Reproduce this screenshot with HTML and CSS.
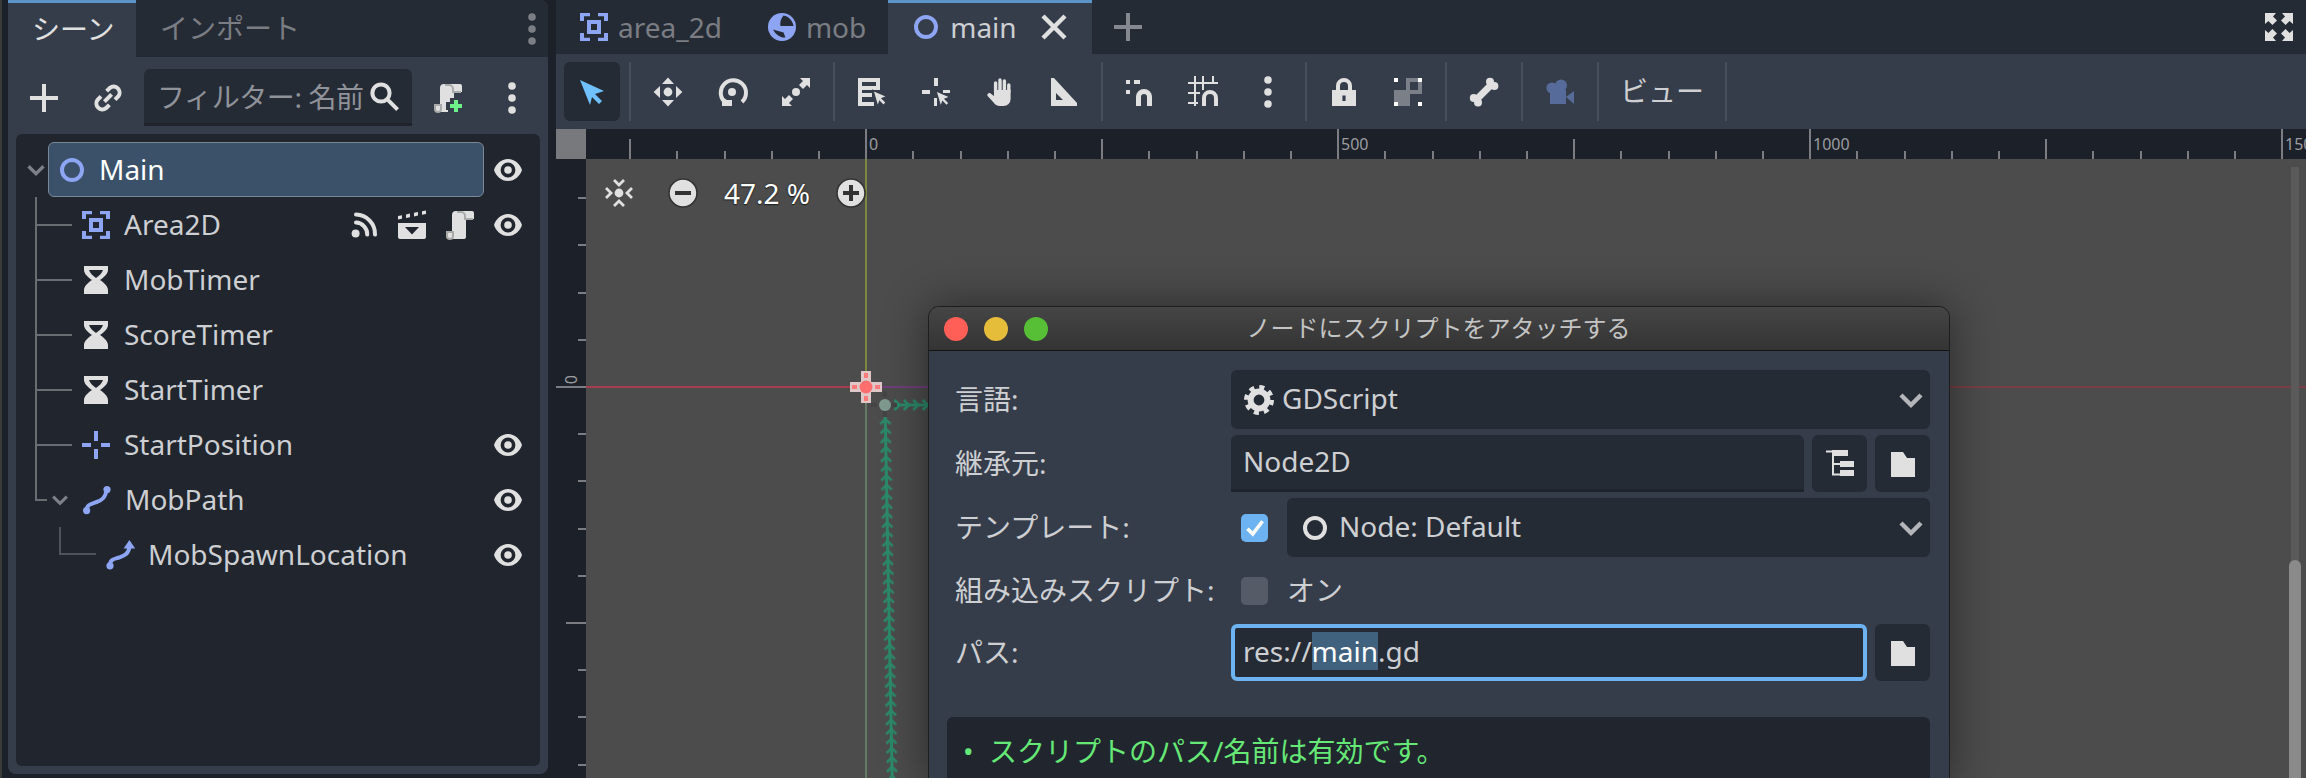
FILE: index.html
```html
<!DOCTYPE html>
<html lang="ja">
<head>
    <meta charset="UTF-8">
    <title>Godot Editor</title>
    <link rel="stylesheet" href="styles.css">
</head>
<body>
    <!-- icon sheet, 16 unit grid like the editor icons -->
    <svg class="sheet" xmlns="http://www.w3.org/2000/svg">
        <symbol id="i-node" viewBox="0 0 16 16"><circle cx="8" cy="8" r="5" fill="none" stroke="currentColor" stroke-width="2"/></symbol>
        <symbol id="i-area" viewBox="0 0 16 16"><path fill="currentColor" fill-rule="evenodd" d="M1 1h5v1.6H3V5H1zM10 1h5v4h-2V2.6h-3zM1 11h2v2.4h3V15H1zM13 11h2v4h-5v-1.6h3zM4.5 4.5h7v7h-7zM6.5 6.5v3h3v-3z"/></symbol>
        <symbol id="i-timer" viewBox="0 0 16 16"><path fill="currentColor" fill-rule="evenodd" d="M2 1h12v2c0 2-2.5 4-4 5 1.5 1 4 3 4 5v2H2v-2c0-2 2.5-4 4-5-1.5-1-4-3-4-5zM4.5 3c.5 1.5 2 3 3.500 4 1.500-1 3-2.500 3.500-4z"/></symbol>
        <symbol id="i-marker" viewBox="0 0 16 16"><path fill="currentColor" d="M7 1h2v5H7zM7 10h2v5H7zM1 7h4.500v2H1zM10.500 7H15v2h-4.500z"/></symbol>
        <symbol id="i-path" viewBox="0 0 16 16"><path d="M2.800 13.200c0-3 2.600-3.400 5-4.200s4.600-2.200 4.800-5.500" fill="none" stroke="currentColor" stroke-width="2"/><circle cx="2.800" cy="13.300" r="1.800" fill="currentColor"/><circle cx="13" cy="2.800" r="1.800" fill="currentColor"/></symbol>
        <symbol id="i-follow" viewBox="0 0 16 16"><path d="M3 13c0-3 2.500-3 4.700-3.800s4.900-1.700 5-5.700" fill="none" stroke="currentColor" stroke-width="2"/><circle cx="3" cy="13.400" r="1.800" fill="currentColor"/><path fill="currentColor" d="M12.700.5l2.900 4.200H9.800z"/></symbol>
        <symbol id="i-eye" viewBox="0 0 16 16"><path fill="currentColor" fill-rule="evenodd" d="M8 2.500C4.500 2.500 2 5 1 8c1 3 3.500 5.500 7 5.500s6-2.500 7-5.500c-1-3-3.500-5.500-7-5.500zM8 4.300a3.700 3.700 0 1 0 0 7.400 3.700 3.700 0 0 0 0-7.400zM8 6.100a1.900 1.900 0 1 1 0 3.800 1.900 1.900 0 0 1 0-3.800z"/></symbol>
        <symbol id="i-signal" viewBox="0 0 16 16"><circle cx="3.800" cy="12.300" r="2" fill="currentColor"/><path d="M4 2.800a9.700 9.700 0 0 1 9.500 10M4 6.800a5.800 5.800 0 0 1 5.600 6" fill="none" stroke="currentColor" stroke-width="2" stroke-linecap="round"/></symbol>
        <symbol id="i-clapper" viewBox="0 0 16 16"><path fill="currentColor" fill-rule="evenodd" d="M1 7h14v7a1 1 0 0 1-1 1H2a1 1 0 0 1-1-1zM4.500 9h7L8 12.700zM1 3.500l2-.4v1.800l-2 .4zM5 2.700l2-.4v1.800l-2 .4zM9 1.900l2-.4v1.800l-2 .4zM13 1.100l2-.4v1.800l-2 .4z"/></symbol>
        <symbol id="i-script" viewBox="0 0 16 16"><path fill="currentColor" d="M6 1h8a1 1 0 0 1 1 1v3h-4v9a1 1 0 0 1-1 1H3a2 2 0 0 1-2-2v-2h3V3a2 2 0 0 1 2-2z"/><path d="M1.500 11.500h3v2a1.500 1.500 0 0 1-3 0zM6.500 1.500h2a2 2 0 0 1 2 2v1.500h4" fill="none" stroke="#a9a9a9"/></symbol>
        <symbol id="i-script-add" viewBox="0 0 16 16"><path fill="currentColor" d="M6 1h8a1 1 0 0 1 1 1v3h-4v3H9v2H7v4h1v1H3a2 2 0 0 1-2-2v-2h3V3a2 2 0 0 1 2-2z"/><path d="M1.500 11.500h3v2a1.500 1.500 0 0 1-3 0zM6.500 1.500h2a2 2 0 0 1 2 2v1.500h4" fill="none" stroke="#a9a9a9"/><path fill="#6fef8a" d="M11 9h2v2h2v2h-2v2h-2v-2H9v-2h2z"/></symbol>
        <symbol id="i-plus" viewBox="0 0 16 16"><path fill="currentColor" d="M7 1h2v6h6v2H9v6H7V9H1V7h6z"/></symbol>
        <symbol id="i-link" viewBox="0 0 16 16"><path d="M6.200 9.800l3.600-3.600M7.300 4.600L9 2.900a3 3 0 0 1 4.200 4.200l-1.700 1.700M8.700 11.400L7 13.100a3 3 0 0 1-4.200-4.200l1.700-1.700" fill="none" stroke="currentColor" stroke-width="2"/></symbol>
        <symbol id="i-search" viewBox="0 0 16 16"><circle cx="6.500" cy="6.500" r="4.300" fill="none" stroke="currentColor" stroke-width="2"/><path d="M9.800 9.800l5 5" stroke="currentColor" stroke-width="2"/></symbol>
        <symbol id="i-dots" viewBox="0 0 16 16"><circle cx="8" cy="2" r="1.900" fill="currentColor"/><circle cx="8" cy="8" r="1.900" fill="currentColor"/><circle cx="8" cy="14" r="1.900" fill="currentColor"/></symbol>
        <symbol id="i-close" viewBox="0 0 16 16"><path d="M2.500 2.500l11 11M13.500 2.500l-11 11" stroke="currentColor" stroke-width="2.200"/></symbol>
        <symbol id="i-fullscreen" viewBox="0 0 16 16"><path fill="currentColor" d="M1 1h5.500L5 2.700l2 2L4.700 7l-2-2L1 6.500zM15 1v5.500L13.300 5l-2 2L9 4.700l2-2L9.500 1zM1 15V9.500L2.700 11l2-2L7 11.300l-2 2L6.500 15zM15 15H9.500l1.500-1.700-2-2L11.300 9l2 2L15 9.500z"/></symbol>
        <symbol id="i-cursor" viewBox="0 0 16 16"><path fill="currentColor" d="M2 2l12 5.500-4.500 1.500 3.500 3.500-1.500 1.500-3.500-3.500L7 14.500z"/></symbol>
        <symbol id="i-move" viewBox="0 0 16 16"><circle cx="8" cy="8" r="2.200" fill="currentColor"/><path fill="currentColor" d="M8 .8L11 4H5zM8 15.200L5 12h6zM.8 8L4 5v6zM15.200 8L12 11V5z"/></symbol>
        <symbol id="i-rotate" viewBox="0 0 16 16"><path d="M5 13.500a6.300 6.300 0 1 1 8 -.5" fill="none" stroke="currentColor" stroke-width="2"/><circle cx="8" cy="8" r="2" fill="currentColor"/><path fill="currentColor" d="M3 15v-4.500l2.500 1.500 2.500 0V15z"/></symbol>
        <symbol id="i-scale" viewBox="0 0 16 16"><circle cx="8" cy="8" r="2" fill="currentColor"/><path fill="currentColor" d="M10 1h5v5l-1.500-1.500L11.500 6.500 9.500 4.500l2-2zM1 15v-5l1.500 1.500 2-2 2 2-2 2L6 15z"/></symbol>
        <symbol id="i-list" viewBox="0 0 16 16"><path fill="currentColor" fill-rule="evenodd" d="M1 1h11v6H3v1.500h5v2H3V13h6v2H1zM3 3v2h7V3z"/><path fill="currentColor" stroke="#363d4a" stroke-width=".6" d="M8.500 7.200l7 3-2.500 1 2 2-1.200 1.500-2-2-.9 2.600z"/></symbol>
        <symbol id="i-pivot" viewBox="0 0 16 16"><path fill="currentColor" d="M7 1h2v4H7zM1 7h4v2H1zM11.500 7H15v1.500h-3.500zM7 11h1.500v4H7z"/><path fill="currentColor" stroke="#363d4a" stroke-width=".6" d="M8 7.500l7 3-2.500 1 2 2-1.200 1.300-2-2-.9 2.600z"/></symbol>
        <symbol id="i-pan" viewBox="0 0 16 16"><path d="M5.800 8V3.500M8 8V2M10.200 8V2.500M12.400 8V4.500" fill="none" stroke="currentColor" stroke-width="1.700" stroke-linecap="round"/><path fill="currentColor" d="M5 7h8.300v4.500A3.500 3.500 0 0 1 9.800 15H8c-1.500 0-2.500-.8-3.200-1.800L1.800 10c-.6-1 .7-2 1.500-1.300L5 10z"/></symbol>
        <symbol id="i-ruler" viewBox="0 0 16 16"><path fill="currentColor" fill-rule="evenodd" d="M1.500 1h1.500l11.500 12.500V15h-13zM4 8.500V12h3.500z"/></symbol>
        <symbol id="i-snap" viewBox="0 0 16 16"><path fill="currentColor" d="M1 2h2v2H1zM1 7h2v2H1zM5 2h3v2H5zM6 15v-4.500a4 4 0 0 1 8 0V15h-2.500v-4.500a1.500 1.500 0 0 0-3 0V15z"/></symbol>
        <symbol id="i-grid" viewBox="0 0 16 16"><path fill="currentColor" d="M3 0h1v15H3zM7 0h1v7H7zM12 0h1v4h-1zM0 3h15v1H0zM0 8h6v1H0zM0 13h5v1H0z"/><path fill="currentColor" d="M7 15v-4a4 4 0 0 1 8 0v4h-2v-4a2 2 0 0 0-4 0v4z"/></symbol>
        <symbol id="i-lock" viewBox="0 0 16 16"><path d="M5 7V5a3 3 0 0 1 6 0v2" fill="none" stroke="currentColor" stroke-width="2"/><path fill="currentColor" fill-rule="evenodd" d="M2 7h12v8H2zM7.200 9.800v2.700h1.600V9.800z"/></symbol>
        <symbol id="i-group" viewBox="0 0 16 16"><path fill="#7b7f88" fill-rule="evenodd" d="M1 7h6V1h8v8H9v6H1zM9 3v4h4V3z"/><path fill="#fff" d="M1 1h2v2H1zM13 1h2v2h-2zM1 13h2v2H1zM13 13h2v2h-2z"/></symbol>
        <symbol id="i-bone" viewBox="0 0 16 16"><path d="M4 12l8-8" stroke="currentColor" stroke-width="3.400"/><g fill="currentColor"><circle cx="2.900" cy="11" r="2"/><circle cx="5" cy="13.200" r="2"/><circle cx="11" cy="2.900" r="2"/><circle cx="13.200" cy="5" r="2"/></g></symbol>
        <symbol id="i-camera" viewBox="0 0 16 16"><g fill="currentColor"><circle cx="4" cy="6" r="2.800"/><circle cx="8.500" cy="4.800" r="3"/><path d="M3 7h8v7H3zM11 10.500l4-3V14z"/></g></symbol>
        <symbol id="i-center" viewBox="0 0 16 16"><circle cx="8" cy="8" r="2.200" fill="currentColor"/><path d="M5.500 1.500L8 4l2.500-2.500M5.500 14.500L8 12l2.500 2.500M1.500 5.500L4 8l-2.500 2.500M14.500 5.500L12 8l2.500 2.500" fill="none" stroke="currentColor" stroke-width="1.400"/></symbol>
        <symbol id="i-minus" viewBox="0 0 16 16"><circle cx="8" cy="8" r="7" fill="currentColor" stroke="#333" stroke-width=".8"/><path fill="#333" d="M4 7h8v2H4z"/></symbol>
        <symbol id="i-zoomin" viewBox="0 0 16 16"><circle cx="8" cy="8" r="7" fill="currentColor" stroke="#333" stroke-width=".8"/><path fill="#333" d="M7 4h2v3h3v2H9v3H7V9H4V7h3z"/></symbol>
        <symbol id="i-gear" viewBox="0 0 16 16"><circle cx="8" cy="8" r="4.200" fill="none" stroke="currentColor" stroke-width="3"/><circle cx="8" cy="8" r="6.300" fill="none" stroke="currentColor" stroke-width="2.400" stroke-dasharray="2.470 2.470"/></symbol>
        <symbol id="i-tree" viewBox="0 0 16 16"><path d="M1 1.800h3.500v11.500H8M4.500 8H8" fill="none" stroke="currentColor"/><path fill="currentColor" d="M4 1h8v3H4zM8 6.500h7v3H8zM8 11h7v3H8z"/></symbol>
        <symbol id="i-folder" viewBox="0 0 16 16"><path fill="currentColor" d="M2 2h6l2 3h4v9.500H2z"/></symbol>
        <symbol id="i-chevron" viewBox="0 0 16 16"><path d="M3 5.500L8 10.500l5-5" fill="none" stroke="currentColor" stroke-width="2.200"/></symbol>
        <symbol id="i-check" viewBox="0 0 16 16"><path d="M3 8.500L6.500 12 13 3.500" fill="none" stroke="currentColor" stroke-width="2.400"/></symbol>
    </svg>

    <div class="dock">
        <div class="dock-tabs">
            <div class="dock-tab active">シーン</div>
            <div class="dock-tab">インポート</div>
            <svg class="ic dock-menu"><use href="#i-dots"/></svg>
        </div>
        <div class="scene-tools">
            <svg class="ic"><use href="#i-plus"/></svg>
            <svg class="ic link-btn"><use href="#i-link"/></svg>
            <div class="filter"><span class="filter-text">フィルター: 名前</span><svg class="ic"><use href="#i-search"/></svg></div>
            <svg class="ic"><use href="#i-script-add"/></svg>
            <svg class="ic menu-btn"><use href="#i-dots"/></svg>
        </div>
        <div class="tree">
            <div class="row root">
                <svg class="fold"><use href="#i-chevron"/></svg>
                <div class="selected"><svg class="ic blue"><use href="#i-node"/></svg><span>Main</span></div>
                <svg class="ic eye"><use href="#i-eye"/></svg>
            </div>
            <div class="row">
                <i class="guide"></i><svg class="ic blue"><use href="#i-area"/></svg><span>Area2D</span>
                <div class="row-icons">
                    <svg class="ic"><use href="#i-signal"/></svg>
                    <svg class="ic"><use href="#i-clapper"/></svg>
                    <svg class="ic"><use href="#i-script"/></svg>
                    <svg class="ic"><use href="#i-eye"/></svg>
                </div>
            </div>
            <div class="row"><i class="guide"></i><svg class="ic"><use href="#i-timer"/></svg><span>MobTimer</span></div>
            <div class="row"><i class="guide"></i><svg class="ic"><use href="#i-timer"/></svg><span>ScoreTimer</span></div>
            <div class="row"><i class="guide"></i><svg class="ic"><use href="#i-timer"/></svg><span>StartTimer</span></div>
            <div class="row">
                <i class="guide"></i><svg class="ic blue"><use href="#i-marker"/></svg><span>StartPosition</span>
                <div class="row-icons"><svg class="ic"><use href="#i-eye"/></svg></div>
            </div>
            <div class="row">
                <i class="guide last"></i><svg class="fold small"><use href="#i-chevron"/></svg><svg class="ic blue"><use href="#i-path"/></svg><span>MobPath</span>
                <div class="row-icons"><svg class="ic"><use href="#i-eye"/></svg></div>
            </div>
            <div class="row">
                <i class="guide child"></i><svg class="ic blue"><use href="#i-follow"/></svg><span>MobSpawnLocation</span>
                <div class="row-icons"><svg class="ic"><use href="#i-eye"/></svg></div>
            </div>
        </div>
    </div>

    <div class="main">
        <div class="scene-tabs">
            <div class="scene-tab"><svg class="ic blue"><use href="#i-area"/></svg>area_2d</div>
            <div class="scene-tab">
                <svg class="ic" viewBox="0 0 16 16"><circle cx="8" cy="8" r="7" fill="#8da5f3"/><path fill="#252b35" d="M8.800 2.200C11 2.500 13.300 4.500 13.800 7.500H7.200c-.3-2 .3-4 1.600-5.300zM3.500 9.200L8.800 10.800 9.700 13.200C7.500 13.500 5 12 3.500 9.200z"/></svg>mob
            </div>
            <div class="scene-tab active"><svg class="ic blue"><use href="#i-node"/></svg>main<svg class="ic close"><use href="#i-close"/></svg></div>
            <svg class="ic tab-add"><use href="#i-plus"/></svg>
            <svg class="ic fullscreen"><use href="#i-fullscreen"/></svg>
        </div>

        <div class="toolbar">
            <div class="tool pressed"><svg class="ic sky"><use href="#i-cursor"/></svg></div>
            <i class="sep"></i>
            <div class="tool"><svg class="ic"><use href="#i-move"/></svg></div>
            <div class="tool"><svg class="ic"><use href="#i-rotate"/></svg></div>
            <div class="tool"><svg class="ic"><use href="#i-scale"/></svg></div>
            <i class="sep"></i>
            <div class="tool"><svg class="ic"><use href="#i-list"/></svg></div>
            <div class="tool"><svg class="ic"><use href="#i-pivot"/></svg></div>
            <div class="tool"><svg class="ic"><use href="#i-pan"/></svg></div>
            <div class="tool"><svg class="ic"><use href="#i-ruler"/></svg></div>
            <i class="sep"></i>
            <div class="tool"><svg class="ic"><use href="#i-snap"/></svg></div>
            <div class="tool"><svg class="ic"><use href="#i-grid"/></svg></div>
            <div class="tool"><svg class="ic"><use href="#i-dots"/></svg></div>
            <i class="sep"></i>
            <div class="tool"><svg class="ic"><use href="#i-lock"/></svg></div>
            <div class="tool"><svg class="ic"><use href="#i-group"/></svg></div>
            <i class="sep"></i>
            <div class="tool"><svg class="ic"><use href="#i-bone"/></svg></div>
            <i class="sep"></i>
            <div class="tool"><svg class="ic muted"><use href="#i-camera"/></svg></div>
            <i class="sep"></i>
            <div class="tool view">ビュー</div>
            <i class="sep"></i>
        </div>

        <div class="ruler-row">
            <div class="corner"></div>
            <div class="ruler-top">
                <span>0</span><span>500</span><span>1000</span><span>1500</span>
            </div>
        </div>

        <div class="view-row">
            <div class="ruler-left"><span>0</span></div>
            <div class="canvas">
                <svg class="gizmos" xmlns="http://www.w3.org/2000/svg">
                    <defs>
                        <pattern id="chev-v" width="12" height="9.400" patternUnits="userSpaceOnUse" x="293" y="258">
                            <path d="M1 7L6 2l5 5" fill="none" stroke="#2b8a69" stroke-width="2.500"/>
                        </pattern>
                        <pattern id="chev-h" width="9.400" height="12" patternUnits="userSpaceOnUse" x="0" y="-6">
                            <path d="M2.500 1L7.500 6l-5 5" fill="none" stroke="#2b8a69" stroke-width="2.500"/>
                        </pattern>
                    </defs>
                    <path d="M280 0v228" stroke="#8b9c3c" stroke-width="1.500"/>
                    <path d="M280 228v400" stroke="#6c8a6c" stroke-width="1.500"/>
                    <path d="M0 228h280" stroke="#c63a50" stroke-width="1.500"/>
                    <path d="M280 228h70" stroke="#7c3a8c" stroke-width="1.500"/>
                    <path d="M1360 228h400" stroke="#8a3a44" stroke-width="1.500"/>

                    <g transform="rotate(-1.100 299 246)">
                        <path d="M299 246v400" stroke="#2b8a69" stroke-width="3"/>
                        <rect x="293" y="258" width="12" height="380" fill="url(#chev-v)"/>
                    </g>
                    <path d="M299 246h50" stroke="#2b8a69" stroke-width="3"/>
                    <g transform="translate(306 246)"><rect width="50" height="12" y="-6" fill="url(#chev-h)"/></g>
                    <path d="M299 232v28M285 246h28" stroke="#444" stroke-width="4" stroke-dasharray="6 4"/>
                    <circle cx="299" cy="246" r="6" fill="#7f9a90"/>

                    <g transform="translate(280 228)">
                        <path d="M-5-16H5V-5H16V5H5V16H-5V5H-16V-5H-5z" fill="#e0c8c8"/>
                        <circle r="6.500" fill="#ff6f6f"/>
                        <path d="M-2-14H2V-9H-2zM-2 9H2V14H-2zM-14-2H-9V2H-14zM9-2H14V2H9z" fill="#ff7a7a"/>
                    </g>
                </svg>

                <div class="zoom-bar">
                    <svg class="ic"><use href="#i-center"/></svg>
                    <svg class="ic minus"><use href="#i-minus"/></svg>
                    <span class="zoom-value">47.2 %</span>
                    <svg class="ic zoomin"><use href="#i-zoomin"/></svg>
                </div>

                <div class="vscroll"><div class="thumb"></div></div>

                <div class="dialog">
                    <div class="titlebar">
                        <div class="lights"><i class="red"></i><i class="yellow"></i><i class="green"></i></div>
                        <div class="title">ノードにスクリプトをアタッチする</div>
                    </div>
                    <div class="dialog-body">
                        <div class="form">
                            <label>言語:</label>
                            <div class="select tall"><svg class="ic"><use href="#i-gear"/></svg><span>GDScript</span><svg class="ic caret"><use href="#i-chevron"/></svg></div>

                            <label>継承元:</label>
                            <div class="line">
                                <div class="field">Node2D</div>
                                <div class="icon-btn"><svg class="ic"><use href="#i-tree"/></svg></div>
                                <div class="icon-btn"><svg class="ic"><use href="#i-folder"/></svg></div>
                            </div>

                            <label>テンプレート:</label>
                            <div class="line">
                                <div class="check on"><svg><use href="#i-check"/></svg></div>
                                <div class="select tall grow"><svg class="ic"><use href="#i-node"/></svg><span>Node: Default</span><svg class="ic caret"><use href="#i-chevron"/></svg></div>
                            </div>

                            <label>組み込みスクリプト:</label>
                            <div class="line builtin">
                                <div class="check"></div>
                                <span>オン</span>
                            </div>

                            <label>パス:</label>
                            <div class="line">
                                <div class="field focus">res://<mark>main</mark>.gd</div>
                                <div class="icon-btn"><svg class="ic"><use href="#i-folder"/></svg></div>
                            </div>
                        </div>
                        <div class="status"><span class="bullet">•</span>スクリプトのパス/名前は有効です。</div>
                    </div>
                </div>
            </div>
        </div>
    </div>
</body>
</html>
```

FILE: styles.css
```css
* {
    box-sizing: border-box;
}
html, body {
    height: 100%;
}
body {
    margin: 0;
    display: flex;
    overflow: hidden;
    font-family: "Noto Sans", "Noto Sans CJK JP", sans-serif;
    font-size: 28px;
    line-height: 38px;
    color: #cdcfd2;
    background: linear-gradient(#3a3a3a, #3a3a3a) 0 0 / 2px 100% no-repeat, #1c2028;
}
.sheet {
    position: absolute;
    width: 0;
    height: 0;
}
.ic {
    flex: none;
    width: 32px;
    height: 32px;
    color: #e0e0e0;
}
.blue {
    color: #8da5f3;
}
.sky {
    color: #70bfff;
}
.muted {
    color: #566b99;
}

/* left dock */
.dock {
    flex: none;
    display: flex;
    flex-direction: column;
    width: 540px;
    margin: 0 8px 4px 8px;
    background: #363d4a;
    border-radius: 0 8px 8px 8px;
    overflow: hidden;
}
.dock-tabs {
    flex: none;
    display: flex;
    align-items: center;
    height: 57px;
    background: #252b35;
}
.dock-tab {
    height: 57px;
    padding: 9px 24px 0 24px;
    white-space: nowrap;
    color: #7a7d83;
}
.dock-tab.active {
    width: 128px;
    padding: 7px 0 0 24px;
    color: #e0e0e0;
    background: #363d4a;
    border-top: 3px solid #5a94c8;
}
.dock-menu {
    margin-left: auto;
    color: #7b7e84;
}
.scene-tools {
    flex: none;
    display: flex;
    align-items: center;
    height: 77px;
    padding: 4px 0 0 20px;
}
.link-btn {
    margin-left: 32px;
}
.menu-btn {
    margin-left: 32px;
}
.filter {
    display: flex;
    align-items: center;
    width: 268px;
    height: 57px;
    margin: 0 20px;
    padding: 2px 0 0 13px;
    background: #252b35;
    border-bottom: 3px solid #1f242c;
    border-radius: 6px 6px 0 0;
    color: #8f9298;
}
.filter-text {
    width: 211px;
    letter-spacing: -0.4px;
    white-space: nowrap;
}
.filter .ic {
    margin-top: -3px;
}
.tree {
    flex: 1;
    margin: 0 8px 8px;
    padding-top: 8px;
    background: #20252e;
    border-radius: 6px;
}
.row {
    display: flex;
    align-items: center;
    height: 55px;
    padding-right: 16px;
}
.root {
    padding-left: 8px;
}
.fold {
    flex: none;
    width: 24px;
    height: 24px;
    color: #7d8086;
}
.fold.small {
    width: 22px;
    height: 22px;
    margin: 0 10px 0 2px;
}
.selected {
    flex: none;
    display: flex;
    align-items: center;
    gap: 11px;
    width: 436px;
    height: 55px;
    padding-left: 7px;
    color: #fff;
    background: #3a5169;
    border: 1px solid #7a8794;
    border-radius: 6px;
}
.eye {
    margin-left: 8px;
}
.guide {
    flex: none;
    width: 37px;
    height: 55px;
    margin: 0 8px 0 19px;
    background:
        linear-gradient(#696c71, #696c71) 0 0 / 2px 100% no-repeat,
        linear-gradient(#696c71, #696c71) 0 50% / 100% 2px no-repeat;
}
.row span {
    margin: 0 0 2px 12px;
}
.selected span {
    margin-left: 0;
}
.guide.last {
    width: 12px;
    margin-right: 0;
    background:
        linear-gradient(#696c71, #696c71) 0 0 / 2px 50% no-repeat,
        linear-gradient(#696c71, #696c71) 0 50% / 100% 2px no-repeat;
}
.guide.child {
    width: 37px;
    height: 28px;
    margin: 0 8px 27px 43px;
    background:
        linear-gradient(#50535a, #50535a) 0 0 / 2px 100% no-repeat,
        linear-gradient(#50535a, #50535a) 0 100% / 100% 2px no-repeat;
}
.row-icons {
    display: flex;
    gap: 16px;
    margin-left: auto;
}

/* main column */
.main {
    flex: 1;
    min-width: 0;
    display: flex;
    flex-direction: column;
}
.scene-tabs {
    flex: none;
    display: flex;
    align-items: center;
    height: 54px;
    background: #252b35;
}
.scene-tab {
    display: flex;
    align-items: center;
    gap: 8px;
    height: 54px;
    padding: 0 22px;
    color: #7a7d83;
}
.scene-tab.active {
    color: #cdcfd2;
    background: #363d4a;
    border-top: 3px solid #5a94c8;
    padding-bottom: 3px;
}
.close {
    margin-left: 13px;
}
.tab-add {
    margin-left: 20px;
    color: #85888e;
}
.fullscreen {
    margin-left: auto;
    margin-right: 11px;
}
.toolbar {
    flex: none;
    display: flex;
    align-items: center;
    height: 75px;
    padding-left: 8px;
    background: #363d4a;
}
.tool {
    display: flex;
    align-items: center;
    justify-content: center;
    width: 64px;
    height: 59px;
}
.tool.pressed {
    width: 56px;
    margin-right: 4px;
    background: #252b35;
    border-radius: 6px;
}
.tool.view {
    width: 116px;
    padding-bottom: 2px;
    color: #cdcfd2;
}
.sep {
    flex: none;
    width: 2px;
    height: 59px;
    margin: 0 5px;
    background: #474e5c;
}

/* rulers */
.ruler-row {
    flex: none;
    display: flex;
    height: 30px;
}
.corner {
    flex: none;
    width: 30px;
    background: #77797d;
}
.ruler-top {
    flex: 1;
    display: flex;
    padding-left: 283px;
    overflow: hidden;
    font-size: 16px;
    line-height: 30px;
    color: #9a9ca0;
    background:
        repeating-linear-gradient(90deg, transparent 0 279px, #7b7d82 279px 281px, transparent 281px 472px) 0 0 / 100% 30px no-repeat,
        repeating-linear-gradient(90deg, transparent 0 43px, #7b7d82 43px 45px, transparent 45px 236px) 0 100% / 100% 20px no-repeat,
        repeating-linear-gradient(90deg, transparent 0 43.2px, #7b7d82 43.2px 45.2px, transparent 45.2px 47.2px) 0 100% / 100% 8px no-repeat,
        #1c2028;
}
.ruler-top span {
    flex: 0 0 472px;
}
.view-row {
    flex: 1;
    min-height: 0;
    display: flex;
}
.ruler-left {
    position: relative;
    flex: none;
    width: 30px;
    font-size: 16px;
    line-height: 16px;
    color: #9a9ca0;
    background:
        repeating-linear-gradient(180deg, transparent 0 227px, #7b7d82 227px 229px, transparent 229px 472px) 0 0 / 30px 100% no-repeat,
        repeating-linear-gradient(180deg, transparent 0 463px, #7b7d82 463px 465px, transparent 465px 472px) 100% 0 / 20px 100% no-repeat,
        repeating-linear-gradient(180deg, transparent 0 38.2px, #7b7d82 38.2px 40.2px, transparent 40.2px 47.2px) 100% 0 / 8px 100% no-repeat,
        #1c2028;
}
.ruler-left span {
    position: absolute;
    left: 7px;
    top: 216px;
    writing-mode: vertical-rl;
    transform: rotate(180deg);
}
.canvas {
    position: relative;
    flex: 1;
    overflow: hidden;
    background: #4c4c4c;
}
.gizmos {
    position: absolute;
    left: 0;
    top: 0;
    width: 100%;
    height: 100%;
}
.zoom-bar {
    position: absolute;
    left: 17px;
    top: 18px;
    display: flex;
    align-items: center;
    height: 32px;
    color: #fff;
}
.minus {
    margin-left: 32px;
}
.zoom-value {
    margin-left: 25px;
    text-shadow: 0 0 2px #222, 0 1px 1px #222;
}
.zoomin {
    margin-left: 25px;
}
.vscroll {
    position: absolute;
    right: 5px;
    top: 8px;
    bottom: 0;
    width: 12px;
    display: flex;
    flex-direction: column;
    background: linear-gradient(#5a5a5a, #5a5a5a) center / 8px 100% no-repeat;
}
.thumb {
    flex: 1;
    margin-top: 393px;
    background: #8a8a8a;
    border-radius: 6px 6px 0 0;
}

/* attach script window */
.dialog {
    position: absolute;
    left: 342px;
    top: 147px;
    width: 1022px;
    height: 480px;
    background: #363d4a;
    border: 1px solid #1e1e1e;
    border-radius: 11px 11px 0 0;
    box-shadow: 0 0 45px rgba(0, 0, 0, 0.45);
}
.titlebar {
    display: grid;
    grid-template-columns: 1fr auto 1fr;
    align-items: center;
    height: 44px;
    padding-left: 15px;
    background: linear-gradient(#454545, #343434);
    border-bottom: 1px solid #141414;
    border-radius: 10px 10px 0 0;
}
.lights {
    display: flex;
    gap: 16px;
}
.lights i {
    width: 24px;
    height: 24px;
    border-radius: 50%;
}
.red {
    background: #ff5f57;
}
.yellow {
    background: #e6bd3a;
}
.green {
    background: #57bf36;
}
.title {
    font-size: 24px;
    line-height: 32px;
    color: #c4c4c4;
    margin: 0 0 2px -16px;
}
.dialog-body {
    padding: 19px 19px 0 18px;
}
.form {
    display: grid;
    grid-template-columns: 284px 1fr;
    grid-template-rows: 59px 57px 59px 55px 57px;
    row-gap: 6px;
    align-items: center;
}
.form label {
    padding: 0 0 2px 8px;
    white-space: nowrap;
}
.line {
    display: flex;
    align-items: center;
    gap: 8px;
    height: 100%;
}
.select {
    display: flex;
    align-items: center;
    gap: 7px;
    height: 59px;
    padding: 0 3px 0 12px;
    background: #252b35;
    border-radius: 6px;
}
.select span {
    margin-bottom: 4px;
}
.grow {
    flex: 1;
}
.grow span {
    margin-left: 1px;
}
.caret {
    margin-left: auto;
    color: #b4b6ba;
}
.field {
    flex: 1;
    height: 57px;
    padding: 7px 12px 0;
    background: #252b35;
    border-bottom: 3px solid #1f242c;
    border-radius: 6px 6px 0 0;
}
.field.focus {
    padding: 4px 8px 0;
    border: 4px solid #6db3f2;
    border-radius: 6px;
}
mark {
    color: #fff;
    background: #41627f;
}
.icon-btn {
    flex: none;
    display: flex;
    align-items: center;
    justify-content: center;
    width: 55px;
    height: 57px;
    background: #252b35;
    border-radius: 6px;
}
.check {
    flex: none;
    width: 27px;
    height: 28px;
    margin: 0 11px 0 10px;
    background: #555c68;
    border-radius: 5px;
}
.check.on {
    display: flex;
    align-items: center;
    justify-content: center;
    color: #fff;
    background: #6db3f2;
}
.check.on svg {
    width: 24px;
    height: 24px;
}
.builtin span {
    margin: 0 0 2px 0;
}
.status {
    height: 90px;
    margin-top: 36px;
    padding: 15px 0 0 16px;
    color: #66e876;
    background: #20252e;
    border-radius: 6px;
}
.bullet {
    display: inline-block;
    width: 26px;
}
```
